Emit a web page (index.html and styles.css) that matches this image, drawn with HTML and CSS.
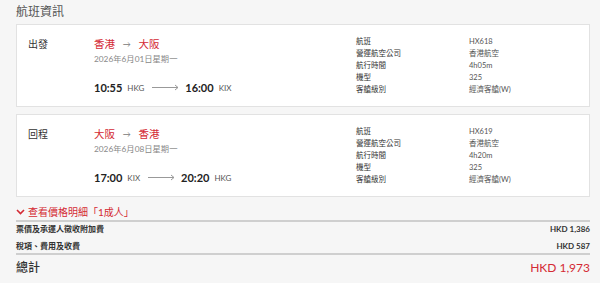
FILE: index.html
```html
<!DOCTYPE html>
<html>
<head>
  <title>航班資訊</title>
  <link rel="stylesheet" href="styles.css">
</head>
<body>
  <div class="page">
    <h1 class="title">航班資訊</h1>

    <div class="card">
      <div class="leg">出發</div>
      <div class="trip">
        <div class="route">香港 <span class="route-arrow">&#8594;</span> 大阪</div>
        <div class="date">2026年6月01日星期一</div>
        <div class="times">
          <span class="time">10:55</span><span class="code">HKG</span>
          <svg class="long-arrow" width="27" height="7" viewBox="0 0 27 7"><path d="M0 3.5H26M23 1L26 3.5L23 6" fill="none" stroke="#999" stroke-width="1"/></svg>
          <span class="time">16:00</span><span class="code">KIX</span>
        </div>
      </div>
      <div class="info">
        <div class="info-label">航班</div><div class="info-value">HX618</div>
        <div class="info-label">營運航空公司</div><div class="info-value">香港航空</div>
        <div class="info-label">航行時間</div><div class="info-value">4h05m</div>
        <div class="info-label">機型</div><div class="info-value">325</div>
        <div class="info-label">客艙級別</div><div class="info-value">經濟客艙(W)</div>
      </div>
    </div>

    <div class="card">
      <div class="leg">回程</div>
      <div class="trip">
        <div class="route">大阪 <span class="route-arrow">&#8594;</span> 香港</div>
        <div class="date">2026年6月08日星期一</div>
        <div class="times">
          <span class="time">17:00</span><span class="code">KIX</span>
          <svg class="long-arrow" width="27" height="7" viewBox="0 0 27 7"><path d="M0 3.5H26M23 1L26 3.5L23 6" fill="none" stroke="#999" stroke-width="1"/></svg>
          <span class="time">20:20</span><span class="code">HKG</span>
        </div>
      </div>
      <div class="info">
        <div class="info-label">航班</div><div class="info-value">HX619</div>
        <div class="info-label">營運航空公司</div><div class="info-value">香港航空</div>
        <div class="info-label">航行時間</div><div class="info-value">4h20m</div>
        <div class="info-label">機型</div><div class="info-value">325</div>
        <div class="info-label">客艙級別</div><div class="info-value">經濟客艙(W)</div>
      </div>
    </div>

    <div class="toggle">
      <svg width="9" height="6" viewBox="0 0 9 6"><path d="M1 1L4.5 4.5L8 1" fill="none" stroke="#d42a34" stroke-width="1.6"/></svg>
      查看價格明細「1成人」
    </div>

    <div class="prices">
      <div class="price-row"><span>票價及承運人徵收附加費</span><span>HKD 1,386</span></div>
      <div class="price-row"><span>稅項、費用及收費</span><span>HKD 587</span></div>
    </div>

    <div class="total">
      <span class="total-label">總計</span>
      <span class="total-amount">HKD 1,973</span>
    </div>
  </div>
</body>
</html>
```

FILE: styles.css
```css
body, html {
  margin: 0;
  background-color: #f6f6f6;
  font-family: Lato, "Noto Sans CJK TC", sans-serif;
  color: #333;
}

.page {
  padding: 0 10px 0 16px;
}

.title {
  font-size: 12px;
  font-weight: normal;
  color: #555;
  line-height: 16px;
  margin: 0 0 4px;
  padding-top: 4px;
}

.card {
  background: #fff;
  border: 1px solid #e2e2e2;
  margin-bottom: 7px;
  display: flex;
  padding: 11px 0 0 11px;
  height: 70px;
}

.leg {
  width: 66px;
  flex-shrink: 0;
  font-size: 10px;
  line-height: 16px;
  color: #333;
}

.trip {
  width: 262px;
  flex-shrink: 0;
}

.route {
  font-size: 10.5px;
  line-height: 16px;
  color: #d42a34;
  white-space: nowrap;
}

.route-arrow {
  font-size: 8px;
  color: #777;
  margin: 0 5px;
  vertical-align: 1px;
}

.date {
  margin-top: 1px;
  font-size: 8.3px;
  line-height: 12px;
  color: #888;
  white-space: nowrap;
}

.times {
  margin-top: 14px;
  display: flex;
  align-items: center;
  height: 16px;
  white-space: nowrap;
}

.time {
  font-size: 11px;
  font-weight: bold;
  color: #222;
}

.code {
  font-size: 8px;
  color: #555;
  margin-left: 5px;
  margin-top: 2px;
}

.long-arrow {
  margin: 1px 6px 0 8px;
}

.info {
  flex: 1;
  display: grid;
  grid-template-columns: 113px 1fr;
  grid-auto-rows: 12px;
  align-content: start;
  font-size: 7.5px;
  line-height: 12px;
  color: #333;
}

.info-value {
  color: #555;
}

.toggle {
  margin-top: 8px;
  font-size: 10px;
  line-height: 14px;
  color: #d42a34;
  display: flex;
  align-items: center;
  gap: 3px;
}

.prices {
  margin-top: 1px;
  border-top: 2px solid #cfcfcf;
  border-bottom: 2px solid #cfcfcf;
}

.price-row {
  display: flex;
  justify-content: space-between;
  font-size: 8px;
  font-weight: bold;
  line-height: 14px;
  color: #333;
}

.price-row + .price-row {
  margin-top: 3px;
}

.total {
  display: flex;
  justify-content: space-between;
  font-size: 12px;
  line-height: 20px;
  padding-top: 3px;
  color: #333;
}

.total-label {
  font-weight: 500;
}

.total-amount {
  color: #d42a34;
}
```
